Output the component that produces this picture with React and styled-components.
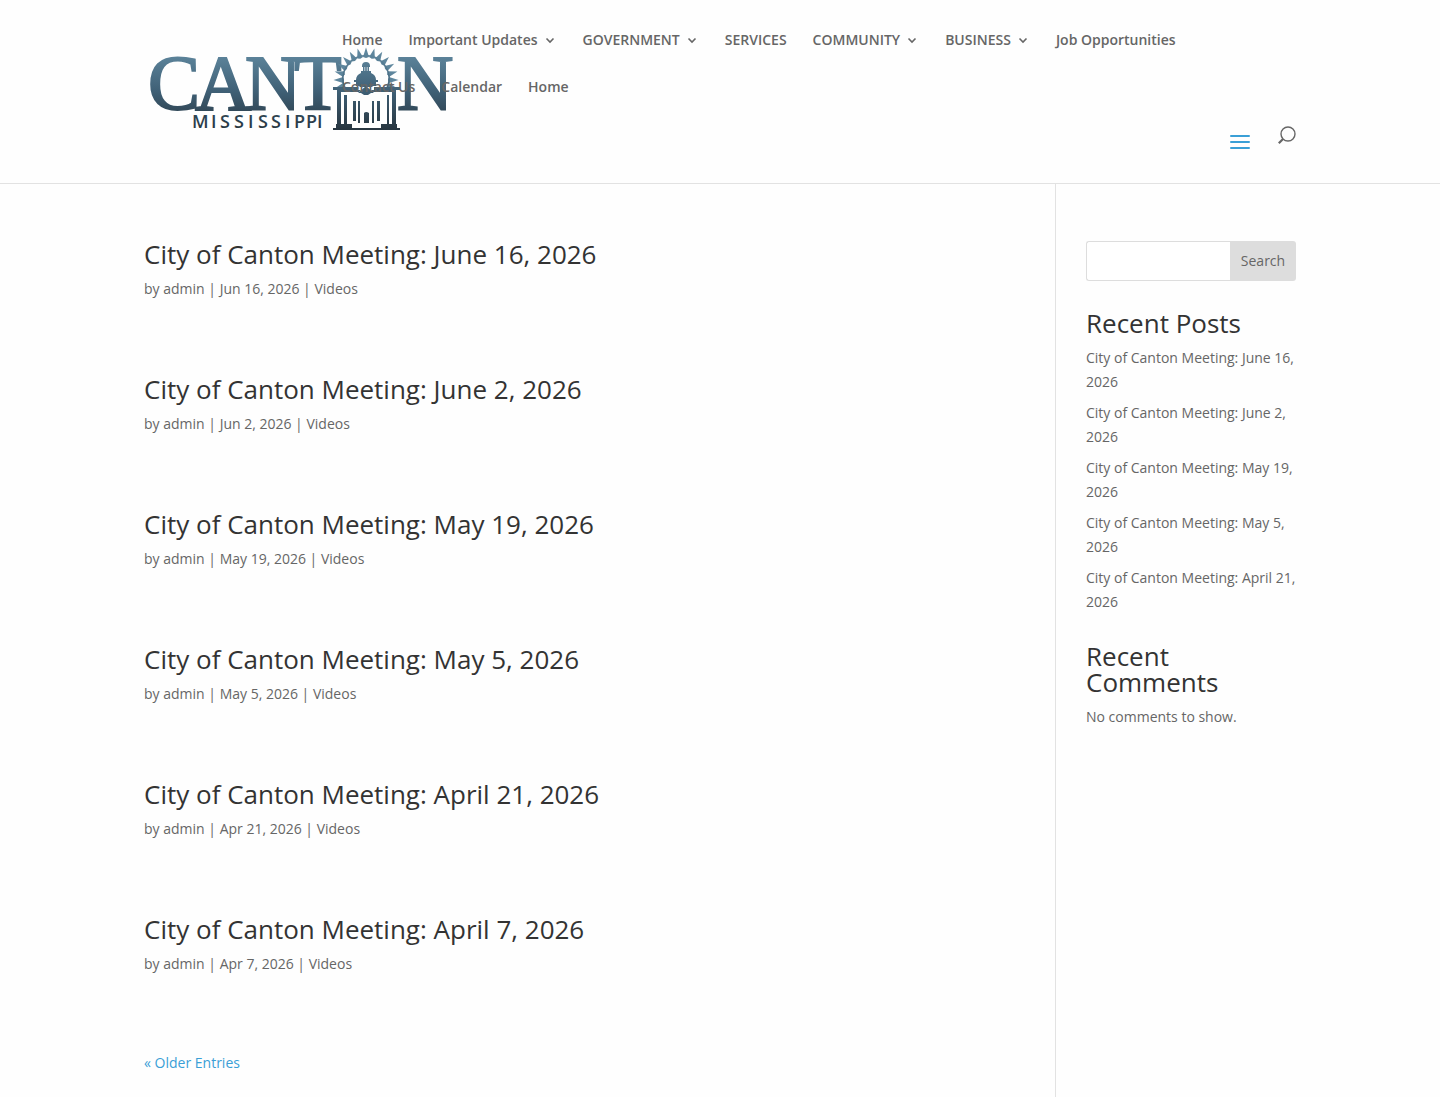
import React from "react";
import styled, { createGlobalStyle } from "styled-components";

const GlobalStyle = createGlobalStyle`
  *,
  *::before,
  *::after {
    box-sizing: border-box;
  }

  body {
    margin: 0;
    background: #fefefe;
    color: #666;
    font-family: "Open Sans", Arial, sans-serif;
    font-size: 14px;
    font-weight: 400;
    line-height: 24px;
  }

  a {
    color: inherit;
    text-decoration: none;
  }

  h2,
  p,
  ul {
    margin: 0;
    padding: 0;
    font-weight: 400;
  }

  ul {
    list-style: none;
  }
`;

const Container = styled.div`
  position: relative;
  width: 80%;
  margin: 0 auto;
`;

const Header = styled.header`
  border-bottom: 1px solid #e2e2e2;
`;

const HeaderInner = styled(Container)`
  display: flex;
  flex-direction: column;
  padding: 0 0 33px 198px;
`;

/* the wide logo runs underneath the first menu items */
const LogoLink = styled.a`
  position: absolute;
  left: 0;
  top: 44px;

  svg {
    display: block;
    overflow: visible;
  }
`;

const Menu = styled.ul`
  position: relative;
  display: flex;
  flex-wrap: wrap;
  column-gap: 26px;
  padding: 28px 90px 0 0;
`;

const MenuItem = styled.li`
  height: 47px;

  a {
    display: flex;
    align-items: center;
    gap: 5px;
    font-weight: 600;
  }
`;

const Tools = styled.div`
  display: flex;
  justify-content: flex-end;
  align-items: flex-start;
  gap: 27px;
`;

const IconButton = styled.button`
  display: flex;
  margin: 0;
  padding: ${({ $top }) => $top}px 0 0;
  border: 0;
  background: none;
  color: ${({ $color }) => $color};
  cursor: pointer;
`;

const Columns = styled(Container)`
  display: grid;
  grid-template-columns: minmax(0, 1fr) 241px;
`;

const Main = styled.main`
  padding: 57px 66px 23px 0;
`;

const Post = styled.article`
  margin-bottom: 75px;
`;

const Title = styled.h2`
  padding-bottom: 10px;
  color: #333;
  font-size: 26px;
  line-height: 26px;
`;

const Sidebar = styled.aside`
  padding: 57px 0 0 30px;
  border-left: 1px solid #e2e2e2;
`;

const Widget = styled.section`
  margin-bottom: 29px;
`;

const SearchForm = styled.form`
  display: flex;
  height: 40px;

  input {
    flex: 1;
    min-width: 0;
    padding: 0 10px;
    border: 1px solid #ddd;
    border-right: 0;
    border-radius: 3px 0 0 3px;
    background: #fff;
    font: inherit;
  }

  button {
    width: 66px;
    padding: 0;
    border: 0;
    border-radius: 0 3px 3px 0;
    background: #ddd;
    color: #666;
    font: inherit;
  }
`;

const RecentList = styled.ul`
  display: grid;
  gap: 7px;
`;

const OlderLink = styled.a`
  color: #3a9fd6;
`;

const menu = [
  { label: "Home" },
  { label: "Important Updates", sub: true },
  { label: "GOVERNMENT", sub: true },
  { label: "SERVICES" },
  { label: "COMMUNITY", sub: true },
  { label: "BUSINESS", sub: true },
  { label: "Job Opportunities" },
  { label: "Contact Us" },
  { label: "Calendar" },
  { label: "Home" },
];

const posts = [
  { title: "City of Canton Meeting: June 16, 2026", date: "Jun 16, 2026" },
  { title: "City of Canton Meeting: June 2, 2026", date: "Jun 2, 2026" },
  { title: "City of Canton Meeting: May 19, 2026", date: "May 19, 2026" },
  { title: "City of Canton Meeting: May 5, 2026", date: "May 5, 2026" },
  { title: "City of Canton Meeting: April 21, 2026", date: "Apr 21, 2026" },
  { title: "City of Canton Meeting: April 7, 2026", date: "Apr 7, 2026" },
];

const Chevron = () => (
  <svg width="14" height="14" viewBox="0 0 14 14" fill="none" stroke="currentColor" strokeWidth="1.6" aria-hidden="true">
    <path d="M3.5 5.5 7 9l3.5-3.5" />
  </svg>
);

const rays = Array.from({ length: 15 }, (_, i) => -105 + i * 15);

const Logo = () => (
  <svg width="312" height="90" viewBox="144 44 312 90" role="img" aria-label="Canton Mississippi">
    <defs>
      <linearGradient id="steel" gradientUnits="userSpaceOnUse" x1="0" y1="52" x2="0" y2="130">
        <stop offset="0" stopColor="#5f879e" />
        <stop offset="0.5" stopColor="#3f6076" />
        <stop offset="1" stopColor="#27353f" />
      </linearGradient>
    </defs>
    <g fill="url(#steel)">
      <g fontFamily="Liberation Serif, serif" fontSize="78" stroke="url(#steel)" strokeWidth="2">
        <text x="148 195 245 294" y="109">CANT</text>
        <text x="397" y="109">N</text>
      </g>
      <text x="192 211 220 234 248 258 271 285 294 306 317" y="128" fontFamily="Open Sans, sans-serif" fontWeight="600" fontSize="18">
        MISSISSIPPI
      </text>
      {rays.map((angle) => (
        <path key={angle} d="M363 57 366 47.500l3 9.500-3 1z" transform={`rotate(${angle} 366 80)`} />
      ))}
      <path d="M345 88a23 23 0 1 1 42 0" fill="none" stroke="url(#steel)" strokeWidth="1.500" />
      <path d="M362 66q0-4 4-4t4 4v1h-8zM363 67h1.500v4H363zM365.200 67h1.600v4h-1.600zM367.500 67h1.500v4h-1.500z" />
      <path d="M361 71h10v2q5 2 5 7h2v2h-2v4h-3l-1 1h-12l-1-1h-3v-4h-2v-2h2q0-5 5-7z" />
      <path d="M366 86l8 7h-3l-3 2h-4l-3-2h-3z" />
      <path d="M333 87h25v3h-25zM374 87h26v3h-26zM337 90h24l-2 2h-22zM371 90h25v2h-23z" />
      <path d="M337 91h4v34h-4zM344 95h3v30h-3zM387 95h2v30h-2zM392 91h4v34h-4z" />
      <path d="M353 101h3v20h-3zM358 101h2v22h-2zM372 101h2v22h-2zM377 101h3v20h-3zM364 113q2-2 5 0v10h-5z" />
      <path d="M336 124h16v4h-16zM381 124h16v4h-16zM333 128h67v2h-67z" />
    </g>
  </svg>
);

const App = () => {
  const menuElement = menu.map((item, index) => (
    <MenuItem key={index}>
      <a href="#">
        {item.label}
        {item.sub && <Chevron />}
      </a>
    </MenuItem>
  ));

  const postElement = posts.map((post) => (
    <Post key={post.title}>
      <Title>
        <a href="#">{post.title}</a>
      </Title>
      <p>
        by <a href="#">admin</a> | {post.date} | <a href="#">Videos</a>
      </p>
    </Post>
  ));

  const recentElement = posts.slice(0, 5).map((post) => (
    <li key={post.title}>
      <a href="#">{post.title}</a>
    </li>
  ));

  return (
    <>
      <GlobalStyle />
      <Header>
        <HeaderInner>
          <LogoLink href="#">
            <Logo />
          </LogoLink>
          <nav>
            <Menu>{menuElement}</Menu>
          </nav>
          <Tools>
            <IconButton type="button" aria-label="Menu" $top={12} $color="#3a9fd6">
              <svg width="22" height="16" viewBox="0 0 22 16" stroke="currentColor" strokeWidth="2" strokeLinecap="round">
                <path d="M2 2h18M2 8h18M2 14h18" />
              </svg>
            </IconButton>
            <IconButton type="button" aria-label="Search" $top={4} $color="#666">
              <svg width="18" height="18" viewBox="0 0 18 18" fill="none" stroke="currentColor">
                <circle cx="10" cy="8" r="7" strokeWidth="1.400" />
                <path d="M5 13 .8 17.200" strokeWidth="2.200" />
              </svg>
            </IconButton>
          </Tools>
        </HeaderInner>
      </Header>
      <Columns>
        <Main>
          {postElement}
          <OlderLink href="#">« Older Entries</OlderLink>
        </Main>
        <Sidebar>
          <Widget>
            <SearchForm role="search">
              <input type="search" aria-label="Search" />
              <button type="submit">Search</button>
            </SearchForm>
          </Widget>
          <Widget>
            <Title>Recent Posts</Title>
            <RecentList>{recentElement}</RecentList>
          </Widget>
          <Widget>
            <Title>Recent Comments</Title>
            <p>No comments to show.</p>
          </Widget>
        </Sidebar>
      </Columns>
    </>
  );
};

export default App;
